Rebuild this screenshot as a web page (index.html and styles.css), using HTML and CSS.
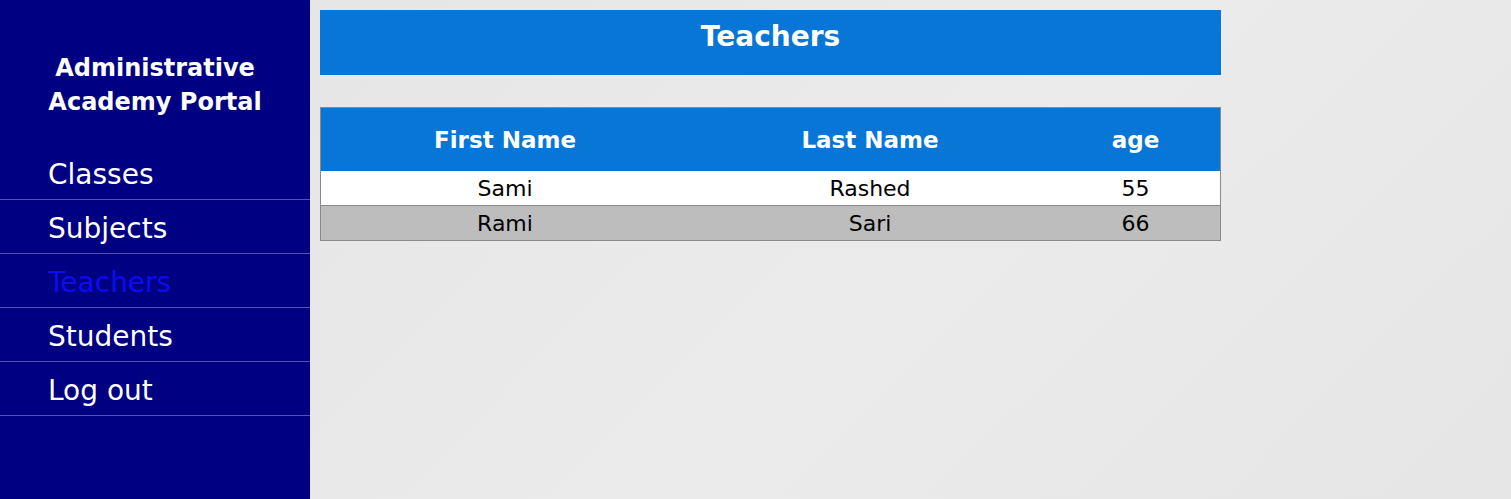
FILE: index.html
```html
<!DOCTYPE html>
<html>
<head>
<meta charset="utf-8">
<link rel="stylesheet" href="styles.css">
</head>
<body>
<div class="app">
  <aside class="sidebar">
    <h1 class="brand">Administrative<br>Academy Portal</h1>
    <nav class="nav">
      <a class="nav-item" href="#">Classes</a>
      <a class="nav-item" href="#">Subjects</a>
      <a class="nav-item active" href="#">Teachers</a>
      <a class="nav-item" href="#">Students</a>
      <a class="nav-item" href="#">Log out</a>
    </nav>
  </aside>
  <main class="main">
    <div class="page-title">Teachers</div>
    <table class="grid">
      <thead>
        <tr><th class="c1">First Name</th><th class="c2">Last Name</th><th class="c3">age</th></tr>
      </thead>
      <tbody>
        <tr class="odd"><td>Sami</td><td>Rashed</td><td>55</td></tr>
        <tr class="even"><td>Rami</td><td>Sari</td><td>66</td></tr>
      </tbody>
    </table>
  </main>
</div>
</body>
</html>
```
FILE: styles.css
```css
html, body {
  margin: 0;
  padding: 0;
  height: 100%;
}
body {
  font-family: "DejaVu Sans", Verdana, sans-serif;
  background: #e9e9e9;
}
.app {
  display: flex;
  height: 499px;
}
.sidebar {
  width: 310px;
  flex: none;
  background: #000083;
  color: #fff;
  box-sizing: border-box;
}
.brand {
  margin: 0;
  padding-top: 51px;
  text-align: center;
  font-size: 24px;
  line-height: 34px;
  font-weight: bold;
  height: 146px;
  box-sizing: border-box;
}
.nav {
  display: flex;
  flex-direction: column;
}
.nav-item {
  display: block;
  height: 53px;
  box-sizing: content-box;
  padding-left: 48px;
  font-size: 28px;
  line-height: 58px;
  overflow: hidden;
  color: #fff;
  text-decoration: none;
  border-bottom: 1px solid #4b57b5;
}
.nav-item.active {
  color: #0c0cf2;
}
.main {
  flex: 1;
  padding: 10px 0 0 10px;
  background: linear-gradient(135deg, #e6e6e6, #ebebeb 50%, #e6e6e6);
}
.page-title {
  width: 901px;
  height: 65px;
  background: #0776d6;
  color: #fff;
  text-align: center;
  font-weight: bold;
  font-size: 28px;
  line-height: 54px;
}
.grid {
  margin-top: 32px;
  width: 901px;
  border-collapse: collapse;
  border: 1px solid #8a8a8a;
  font-size: 22px;
}
.grid th {
  background: #0776d6;
  color: #fff;
  font-weight: bold;
  font-size: 23px;
  height: 63px;
  padding: 0;
  text-align: center;
}
.grid .c1 { width: 368px; }
.grid .c2 { width: 362px; }
.grid td {
  height: 34px;
  padding: 0;
  padding-top: 2px;
  box-sizing: border-box;
  text-align: center;
  color: #000;
  line-height: 32px;
}
.grid tr.odd td {
  background: #fff;
  border-bottom: 1px solid #8a8a8a;
}
.grid tr.even td {
  background: #bdbdbd;
}
```
